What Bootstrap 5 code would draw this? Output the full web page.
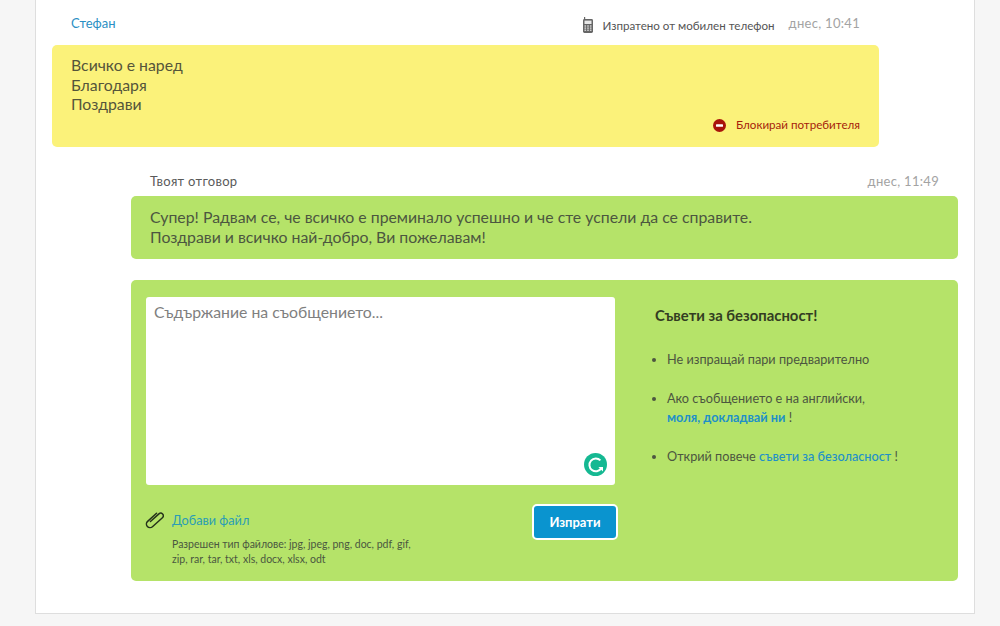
<!DOCTYPE html>
<html lang="bg">
<head>
    <meta charset="UTF-8">
    <meta name="viewport" content="width=device-width, initial-scale=1.0">
    <title>Съобщения</title>
    <link href="https://cdn.jsdelivr.net/npm/bootstrap@5.3.0/dist/css/bootstrap.min.css" rel="stylesheet">
    <style>
        body { background: #f6f6f6; font-family: Lato, "Open Sans", sans-serif; color: #4a4a4a; font-size: 13px; height: 626px; overflow: hidden; }
        a { text-decoration: none; color: #1e90c8; }
        .sheet { width: 940px; height: 614px; margin-left: 35px; background: #fff; border: 1px solid #dedede; border-top: 0; padding-left: 16px; }
        .msg-head { height: 45px; width: 827px; padding: 14px 19px 0 19px; }
        .who { color: #2a8fc4; font-size: 13px; line-height: 18px; }
        .when { color: #a3a3a3; font-size: 13px; line-height: 18px; letter-spacing: .3px; }
        .phone-ico { margin: 3px 10px 0 0; }
        .via { color: #555; font-size: 11.6px; line-height: 18px; margin: 3px 14px 0 0; }
        .msg-yellow { width: 827px; height: 102px; background: #fbf27a; border-radius: 5px; padding: 10px 19px 0; position: relative; font-size: 15.8px; line-height: 19.5px; color: #55553a; }
        .block-link { color: #a61d0b; font-size: 11.6px; line-height: 16px; position: absolute; right: 19px; bottom: 14px; display: flex; align-items: center; gap: 10px; }
        .reply-wrap { margin-left: 79px; width: 827px; }
        .reply-head { height: 49px; padding: 25px 19px 0; }
        .reply-label { color: #5a5a5a; font-size: 13px; line-height: 19px; letter-spacing: .3px; }
        .msg-green { height: 63px; background: #b5e369; border-radius: 5px; padding: 11px 19px 0; font-size: 15.83px; line-height: 20px; color: #4c5640; }
        .form-box { height: 301px; margin-top: 21px; background: #b5e369; border-radius: 5px; padding: 17px 0 0 15px; }
        .left-col { width: 473px; }
        .text-box { width: 469px; height: 188px; background: #fff; border-radius: 3px; padding: 4px 8px; position: relative; font-size: 15.8px; line-height: 22px; color: #7f7f7f; }
        .g-badge { position: absolute; right: 8px; bottom: 9px; width: 23px; height: 23px; }
        .attach-row { padding-top: 26px; }
        .clip-ico { margin: 0 8px 0 -1px; }
        .attach { font-size: 12.7px; color: #2a9db5; line-height: 18px; }
        .file-note { font-size: 10.5px; line-height: 15px; color: #4a5740; margin: 8px 0 0 26px; width: 250px; }
        .send-btn { width: 86px; height: 36px; margin: 3px 1px 0 0; background: #0a94cf; color: #fff; border: 2px solid #fff; border-radius: 5px; font-weight: 700; font-size: 13px; padding: 0; line-height: 1; }
        .send-btn:hover { background: #0a94cf; color: #fff; border-color: #fff; }
        .tips { padding: 8px 0 0 36px; }
        .tips-title { font-size: 14.85px; font-weight: 700; color: #333d22; line-height: 20px; margin: 0 0 25px; }
        .tips ul { margin: 0; padding-left: 12px; font-size: 12.7px; line-height: 19.5px; color: #4c5640; }
        .tips li { margin-bottom: 19px; }
        .tips a { font-weight: 700; color: #1e90c8; }
        .tips li a.thin { font-weight: 500; }
    </style>
</head>
<body>
    <div class="sheet">
        <div class="msg-head d-flex justify-content-between">
            <a class="who" href="#">Стефан</a>
            <div class="d-flex align-items-start">
                <svg class="phone-ico" width="10" height="16" viewBox="0 0 10 16"><rect x="1" y="0" width="1.2" height="3" fill="#666"/><rect x="0" y="2" width="10" height="14" rx="1.4" fill="#666"/><rect x="1.5" y="3.6" width="7" height="3.4" fill="#e8e8e8"/><g fill="#e8e8e8"><rect x="1.5" y="8.4" width="1.6" height="1.2"/><rect x="4.2" y="8.4" width="1.6" height="1.2"/><rect x="6.9" y="8.4" width="1.6" height="1.2"/><rect x="1.5" y="10.5" width="1.6" height="1.2"/><rect x="4.2" y="10.5" width="1.6" height="1.2"/><rect x="6.9" y="10.5" width="1.6" height="1.2"/><rect x="1.5" y="12.6" width="1.6" height="1.2"/><rect x="4.2" y="12.6" width="1.6" height="1.2"/><rect x="6.9" y="12.6" width="1.6" height="1.2"/></g></svg>
                <span class="via">Изпратено от мобилен телефон</span>
                <span class="when">днес, 10:41</span>
            </div>
        </div>
        <div class="msg-yellow">
            Всичко е наред<br>Благодаря<br>Поздрави
            <a class="block-link" href="#">
                <svg width="13" height="13" viewBox="0 0 13 13"><circle cx="6.5" cy="6.5" r="6.5" fill="#a8140a"/><rect x="3" y="5.2" width="7" height="2.6" rx=".6" fill="#fff"/></svg>
                Блокирай потребителя
            </a>
        </div>
        <div class="reply-wrap">
            <div class="reply-head d-flex justify-content-between">
                <span class="reply-label">Твоят отговор</span>
                <span class="when">днес, 11:49</span>
            </div>
            <div class="msg-green">
                Супер! Радвам се, че всичко е преминало успешно и че сте успели да се справите.<br>
                Поздрави и всичко най-добро, Ви пожелавам!
            </div>
            <div class="form-box d-flex">
                <div class="left-col">
                    <div class="text-box">
                        Съдържание на съобщението...
                        <svg class="g-badge" viewBox="0 0 23 23"><circle cx="11.5" cy="11.5" r="11.5" fill="#15b892"/><path d="M16.4 7.4A6.4 6.4 0 1 0 17.2 15.4" fill="none" stroke="#fff" stroke-width="2"/><path d="M14.4 14h4.6v4.6z" fill="#fff"/></svg>
                    </div>
                    <div class="d-flex justify-content-between">
                        <div class="attach-row">
                            <div class="d-flex align-items-center">
                                <svg class="clip-ico" width="19" height="18" viewBox="0 0 19 18"><g transform="translate(9.5 9) rotate(48)"><path d="M-3.6 -6V6a3.6 3.6 0 0 0 7.2 0V-7.4a2.6 2.6 0 0 0 -5.2 0V4" fill="none" stroke="#25331a" stroke-width="1.5" stroke-linecap="round"/></g></svg>
                                <a class="attach" href="#">Добави файл</a>
                            </div>
                            <div class="file-note">Разрешен тип файлове: jpg, jpeg, png, doc, pdf, gif, zip, rar, tar, txt, xls, docx, xlsx, odt</div>
                        </div>
                        <div class="pt-3"><button type="button" class="btn send-btn">Изпрати</button></div>
                    </div>
                </div>
                <div class="tips">
                    <p class="tips-title">Съвети за безопасност!</p>
                    <ul>
                        <li>Не изпращай пари предварително</li>
                        <li>Ако съобщението е на английски,<br><a href="#">моля, докладвай ни</a> !</li>
                        <li>Открий повече <a class="thin" href="#">съвети за безоласност</a> !</li>
                    </ul>
                </div>
            </div>
        </div>
    </div>
    <script src="https://cdn.jsdelivr.net/npm/bootstrap@5.3.0/dist/js/bootstrap.bundle.min.js"></script>
</body>
</html>
